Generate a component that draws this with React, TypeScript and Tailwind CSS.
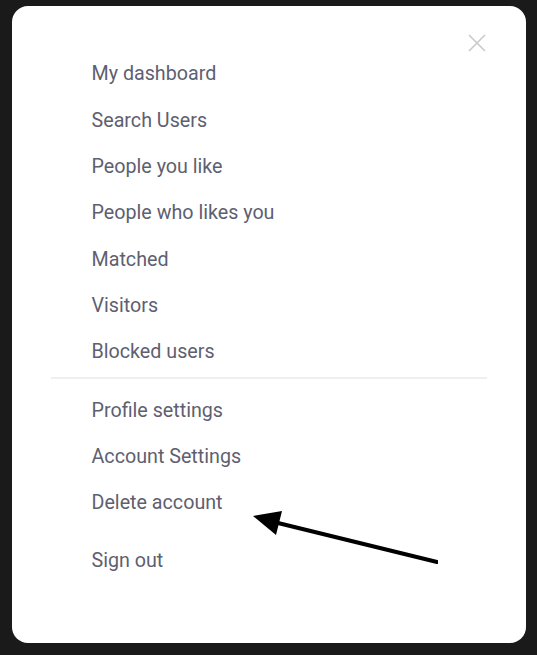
const mainLinks = [
  "My dashboard",
  "Search Users",
  "People you like",
  "People who likes you",
  "Matched",
  "Visitors",
  "Blocked users",
];

const accountLinks = ["Profile settings", "Account Settings", "Delete account"];

export default function App() {
  return (
    <div className="flex h-[655px] w-full items-start justify-center bg-[#1a1a1a] pt-[6px] font-['Roboto',sans-serif]">
      <div className="relative h-[637px] w-[514px] rounded-[16px] bg-white">
        <button
          type="button"
          aria-label="Close"
          className="absolute right-[40px] top-[28px] flex h-[18px] w-[18px] items-center justify-center text-[#c9c9cc]"
        >
          <svg viewBox="0 0 18 18" className="h-[18px] w-[18px]" fill="none" stroke="currentColor" strokeWidth="1.6">
            <path d="M1 1 L17 17 M17 1 L1 17" />
          </svg>
        </button>

        <nav className="pt-[45px]">
          <ul className="px-[80px]">
            {mainLinks.map((label) => (
              <li key={label} className="flex h-[46.3px] items-center text-[19.7px] text-[#5e5f70]">
                {label}
              </li>
            ))}
          </ul>

          <div className="mx-[39px] mt-[2px] h-[2px] bg-[#efefef]" />

          <ul className="mt-[9px] px-[80px]">
            {accountLinks.map((label) => (
              <li key={label} className="flex h-[46px] items-center text-[19.7px] text-[#5e5f70]">
                {label}
              </li>
            ))}
            <li className="mt-[12px] flex h-[46px] items-center text-[19.7px] text-[#5e5f70]">Sign out</li>
          </ul>
        </nav>

        <svg className="absolute left-[226px] top-[495px] h-[75px] w-[200px]" viewBox="0 0 200 75" fill="none">
          <path d="M199 61 L40 22" stroke="#000" strokeWidth="4" strokeLinecap="round" />
          <path d="M15 15 L44 10 L38 34 Z" fill="#000" />
        </svg>
      </div>
    </div>
  );
}
